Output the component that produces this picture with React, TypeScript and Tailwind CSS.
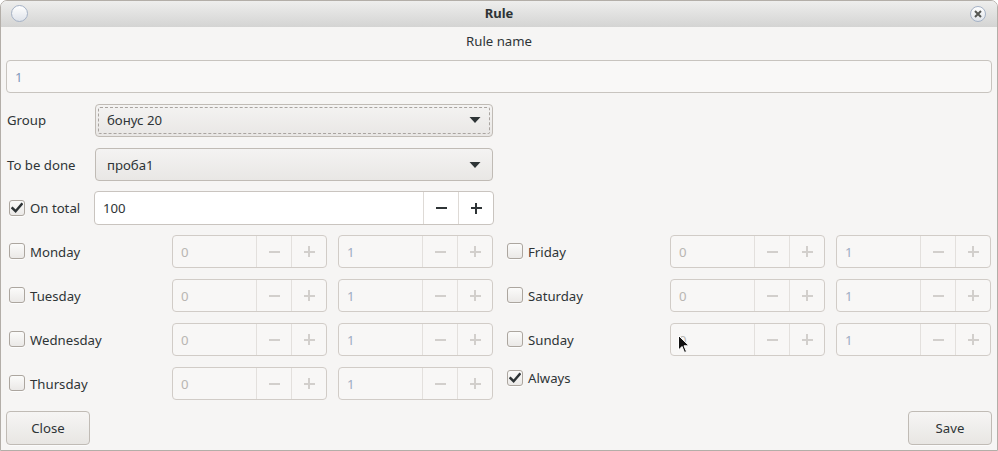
import React from 'react';

const FONT = { fontFamily: '"Noto Sans", "Open Sans", sans-serif' };

function Check({ checked }: { checked?: boolean }) {
  return (
    <span className="relative flex h-4 w-4 shrink-0 items-center justify-center rounded-[3px] border border-[#aca69f] bg-gradient-to-b from-[#fbfbfa] to-[#ebe9e7] shadow-[0_1px_0_rgba(255,255,255,0.8)]">
      {checked ? (
        <svg width="12" height="12" viewBox="0 0 12 12">
          <path d="M1.5 6.2 L4.6 9.2 L10.6 2.2" fill="none" stroke="#2e3436" strokeWidth="2.4" strokeLinecap="square" />
        </svg>
      ) : null}
    </span>
  );
}

function CheckLabel({ label, checked, className = '' }: { label: string; checked?: boolean; className?: string }) {
  return (
    <div className={`flex items-center gap-[5px] pl-[3px] ${className}`}>
      <Check checked={checked} />
      <span className="translate-y-[1px] text-[#2e3436]">{label}</span>
    </div>
  );
}

function Minus({ c }: { c: string }) {
  return <span className="block h-[2px] w-[11px]" style={{ background: c }} />;
}

function Plus({ c }: { c: string }) {
  return (
    <span className="relative block h-[11px] w-[11px]">
      <span className="absolute left-0 top-[4.5px] h-[2px] w-[11px]" style={{ background: c }} />
      <span className="absolute left-[4.5px] top-0 h-[11px] w-[2px]" style={{ background: c }} />
    </span>
  );
}

function Spin({
  value,
  disabled,
  valueColor,
  className = '',
}: {
  value: string;
  disabled?: boolean;
  valueColor?: string;
  className?: string;
}) {
  const line = disabled ? '#e3e0dd' : '#dedad6';
  const glyph = disabled ? '#d2cfcc' : '#2e3436';
  return (
    <div
      className={`flex h-[33px] overflow-hidden rounded-[4px] border ${
        disabled ? 'border-[#d1ccc7] bg-[#f8f7f6]' : 'border-[#c9c4bf] bg-white'
      } ${className}`}
    >
      <div
        className="flex flex-1 translate-y-[1px] items-center pl-2"
        style={{ color: valueColor ?? (disabled ? '#b9b6b2' : '#2e3436') }}
      >
        {value}
      </div>
      <div className="flex w-[35px] items-center justify-center border-l" style={{ borderColor: line }}>
        <Minus c={glyph} />
      </div>
      <div className="flex w-[35px] items-center justify-center border-l" style={{ borderColor: line }}>
        <Plus c={glyph} />
      </div>
    </div>
  );
}

function Combo({ value, focused }: { value: string; focused?: boolean }) {
  return (
    <div className="h-[33px] w-[398px] rounded-[4px] border border-[#c0bbb5] bg-gradient-to-b from-[#f4f3f2] to-[#e9e7e5] p-[2px]">
      <div
        className={`flex h-full items-center justify-between rounded-[2px] pl-[8px] pr-[8px] ${
          focused ? 'border border-dashed border-[#a9a4a0]' : 'border border-transparent'
        }`}
      >
        <span className="translate-y-[1px] text-[#2e3436]">{value}</span>
        <svg width="12" height="8" viewBox="0 0 12 8">
          <path d="M0.5 1 L11.5 1 L6 7 Z" fill="#2e3436" />
        </svg>
      </div>
    </div>
  );
}

function DayRow({ label, a, b }: { label: string; a: string; b: string }) {
  return (
    <div className="flex h-[33px] items-center">
      <CheckLabel label={label} className="w-[166px]" />
      <Spin value={a} disabled className="w-[155px]" />
      <Spin value={b} disabled valueColor="#9fadc3" className="ml-[11px] w-[155px]" />
    </div>
  );
}

function Button({ label }: { label: string }) {
  return (
    <div className="flex h-[34px] w-[84px] items-center justify-center rounded-[4px] border border-[#c0bbb5] bg-gradient-to-b from-[#f6f5f4] to-[#e8e6e3] text-[#2e3436] shadow-[0_1px_0_rgba(255,255,255,0.6)]">
      <span className="translate-y-[1px]">{label}</span>
    </div>
  );
}

export default function App() {
  return (
    <div className="relative h-[451px] w-[998px] overflow-hidden text-[13.2px]" style={FONT}>
      <div className="flex h-full flex-col rounded-t-[7px] border border-[#b3aea8] bg-[#f6f5f4]">
        {/* title bar */}
        <div className="relative flex h-[26px] shrink-0 items-center justify-center rounded-t-[6px] bg-gradient-to-b from-[#eeeeed] to-[#d4d4d3]">
          <span className="absolute left-[10px] top-[4px] h-[17px] w-[17px] rounded-full border border-[#a5b2c6] bg-gradient-to-b from-white to-[#dfe3ea]" />
          <span className="text-[13px] font-bold text-[#2e3436]">Rule</span>
          <span className="absolute right-[11px] top-[5px] flex h-[16px] w-[16px] items-center justify-center rounded-full border border-[#a5b2c6] bg-gradient-to-b from-white to-[#dfe3ea]">
            <svg width="8" height="8" viewBox="0 0 8 8">
              <path d="M1 1 L7 7 M7 1 L1 7" stroke="#555753" strokeWidth="2" />
            </svg>
          </span>
        </div>

        <div className="flex flex-1 flex-col px-[5px]">
          <div className="mt-[5px] flex h-[20px] items-center justify-center text-[#2e3436]">Rule name</div>
          <div className="mt-[8px] flex h-[33px] items-center rounded-[4px] border border-[#c8c4bf] bg-[#f9f8f7] pl-2 text-[#8198bb]">
            <span className="translate-y-[1px]">1</span>
          </div>

          <div className="mt-[10px] flex h-[34px] items-center">
            <span className="w-[89px] translate-y-[1px] pl-[1px] text-[#2e3436]">Group</span>
            <Combo value="бонус 20" focused />
          </div>
          <div className="mt-[11px] flex h-[33px] items-center">
            <span className="w-[89px] translate-y-[1px] pl-[1px] text-[#2e3436]">To be done</span>
            <Combo value="проба1" />
          </div>
          <div className="mt-[10px] flex h-[34px] items-center">
            <CheckLabel label="On total" checked className="w-[88px]" />
            <Spin value="100" className="h-[34px] w-[400px]" />
          </div>

          <div className="mt-[10px] flex gap-[11px]">
            <div className="flex flex-col gap-[11px]">
              <DayRow label="Monday" a="0" b="1" />
              <DayRow label="Tuesday" a="0" b="1" />
              <DayRow label="Wednesday" a="0" b="1" />
              <DayRow label="Thursday" a="0" b="1" />
            </div>
            <div className="flex flex-col gap-[11px]">
              <DayRow label="Friday" a="0" b="1" />
              <DayRow label="Saturday" a="0" b="1" />
              <DayRow label="Sunday" a="0" b="1" />
              <div className="flex h-[22px] items-center">
                <CheckLabel label="Always" checked />
              </div>
            </div>
          </div>

          <div className="mt-auto mb-[5px] flex justify-between">
            <Button label="Close" />
            <Button label="Save" />
          </div>
        </div>
      </div>

      {/* mouse pointer */}
      <svg className="absolute left-[678px] top-[335px]" width="12" height="19" viewBox="0 0 12 19">
        <path d="M0.5 0.5 L0.5 15 L4 11.5 L6.5 17.5 L8.5 16.6 L6 10.8 L11 10.8 Z" fill="#111" stroke="#fff" strokeWidth="1" />
      </svg>
    </div>
  );
}
